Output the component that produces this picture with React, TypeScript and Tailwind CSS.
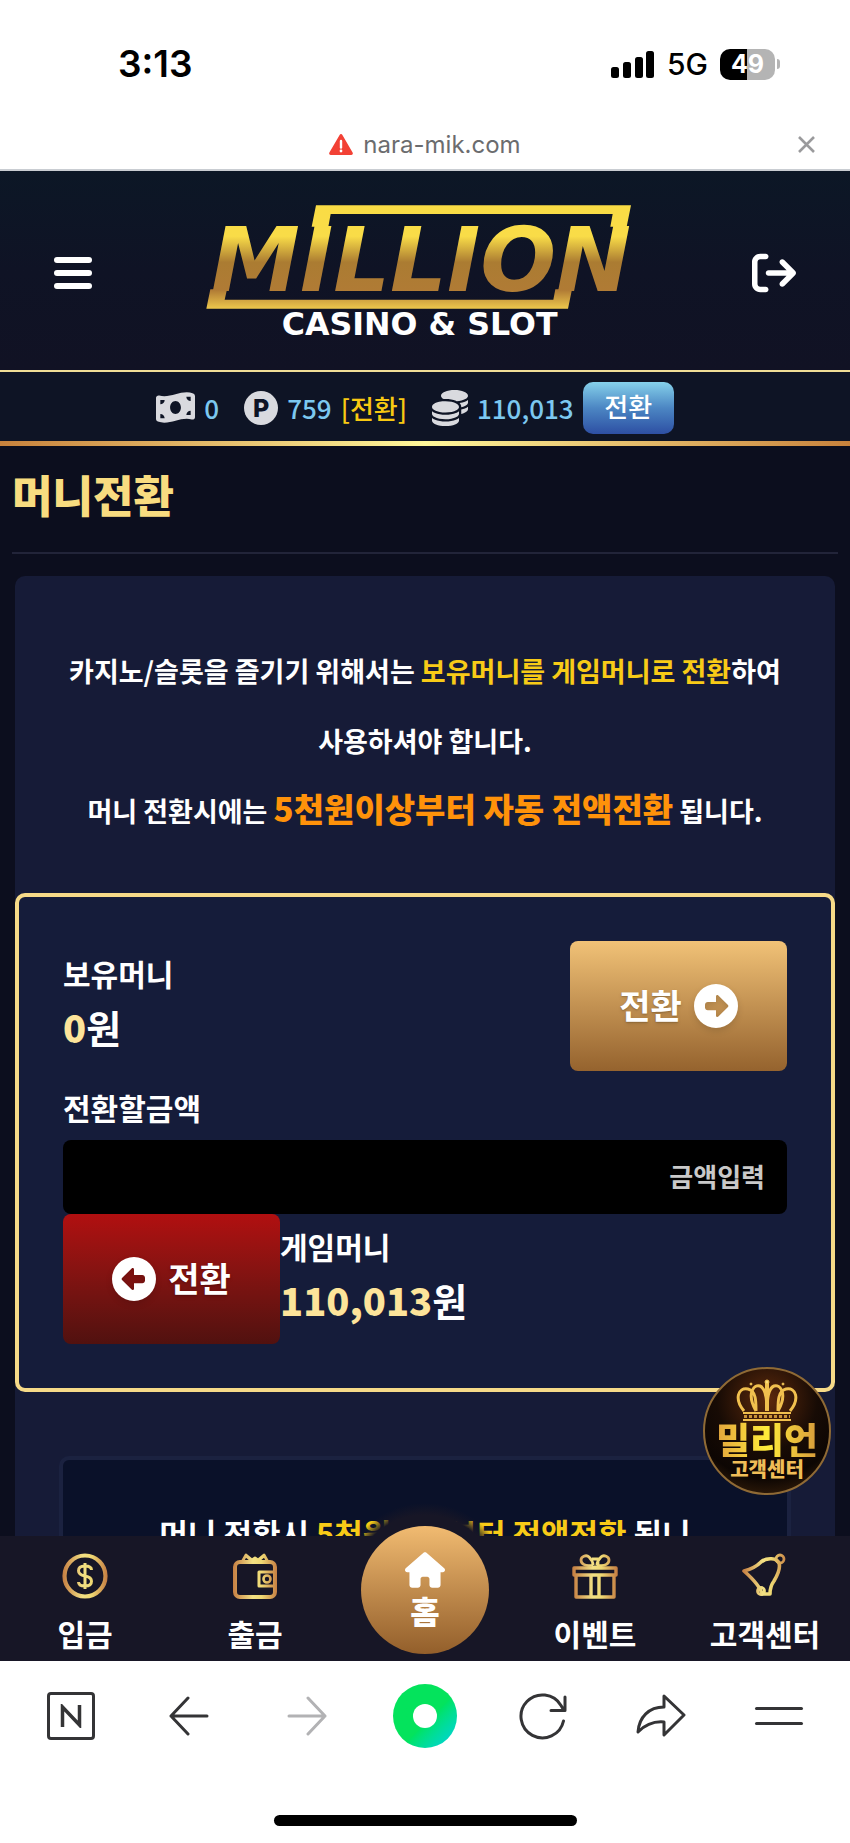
import { FaArrowRightFromBracket, FaCircleLeft, FaCircleRight, FaCoins, FaHouse, FaMoneyBillWave } from "react-icons/fa6";

const balance = { cash: "0", point: "759", game: "110,013" };

function StatusBar() {
  return (
    <div className="flex h-[120px] shrink-0 items-center justify-between bg-white pt-2 pr-[70px] pl-[118px] font-['Inter',sans-serif] text-black">
      <span className="text-[37px] leading-10 font-semibold">3:13</span>
      <div className="flex items-center gap-3">
        <svg className="h-[27px] w-11" viewBox="0 0 44 27" aria-hidden="true">
          <rect x="0" y="16" width="8" height="11" rx="2.5" />
          <rect x="12" y="11" width="8" height="16" rx="2.5" />
          <rect x="24" y="6" width="8" height="21" rx="2.5" />
          <rect x="35" y="0" width="8" height="27" rx="2.5" />
        </svg>
        <span className="text-[30px] leading-8 font-medium">5G</span>
        <div className="flex items-center gap-0.5">
          <div className="flex h-[31px] w-[55px] items-center justify-center rounded-[10px] bg-linear-to-r from-black from-50% to-[#b4b4b4] to-50% text-[25px] leading-7 font-bold text-white">
            49
          </div>
          <div className="h-2.5 w-[3px] rounded-r bg-[#b4b4b4]" />
        </div>
      </div>
    </div>
  );
}

function AddressBar() {
  return (
    <div className="grid h-[51px] shrink-0 grid-cols-[1fr_auto_1fr] items-center border-b-2 border-[#c9cdd2] bg-white px-[34px]">
      <span />
      <div className="flex items-center gap-2.5 font-['Inter',sans-serif] text-[24px] leading-8 text-[#6b6c6e]">
        <svg className="h-[21px] w-6" viewBox="0 0 24 21" aria-hidden="true">
          <path d="M10.6.9a1.6 1.6 0 0 1 2.8 0l10.2 17.7A1.6 1.6 0 0 1 22.2 21H1.8a1.6 1.6 0 0 1-1.4-2.4z" fill="#f24135" />
          <path d="M12 7v6.5" stroke="#fff" strokeWidth="2.4" strokeLinecap="round" />
          <circle cx="12" cy="17" r="1.4" fill="#fff" />
        </svg>
        nara-mik.com
      </div>
      <button aria-label="닫기" className="justify-self-end">
        <svg className="size-[19px]" viewBox="0 0 19 19" aria-hidden="true">
          <path d="M2 2l15 15M17 2L2 17" stroke="#9a9a9c" strokeWidth="2.6" />
        </svg>
      </button>
    </div>
  );
}

function Logo() {
  return (
    <svg className="h-[150px] w-[450px]" viewBox="0 0 1350 450" role="img" aria-label="MILLION CASINO & SLOT">
      <defs>
        <linearGradient id="logoGold" gradientUnits="userSpaceOnUse" x1="0" y1="22" x2="0" y2="332">
          <stop offset="0" stopColor="#f9dc45" />
          <stop offset="0.3" stopColor="#f9dc48" />
          <stop offset="0.55" stopColor="#ab7c32" />
          <stop offset="0.82" stopColor="#b07b35" />
          <stop offset="1" stopColor="#edc74c" />
        </linearGradient>
      </defs>
      <g fill="url(#logoGold)">
        <path d="M344 86L357 22H1302L1289 86H1240L1247 48H401L394 86Z" />
        <path d="M40 274L28 332H1113L1125 274H1075L1069 305H83L90 274Z" />
        <text x="42" y="278" fontFamily="DejaVu Sans, sans-serif" fontSize="268" fontWeight="700" fontStyle="italic">MILLION</text>
      </g>
      <text x="668" y="410" textAnchor="middle" fill="#fff" fontFamily="DejaVu Sans, sans-serif" fontSize="95" fontWeight="700">CASINO &amp; SLOT</text>
    </svg>
  );
}

function Header() {
  return (
    <header className="flex h-[201px] shrink-0 items-center justify-between border-b-2 border-[#f0dd96] bg-linear-to-b from-[#0c1726] via-[#0f1325] to-[#111224] px-[54px] pt-1 text-white">
      <button aria-label="메뉴" className="flex w-[38px] flex-col gap-[7px]">
        <span className="h-[6px] rounded-sm bg-current" />
        <span className="h-[6px] rounded-sm bg-current" />
        <span className="h-[6px] rounded-sm bg-current" />
      </button>
      <Logo />
      <button aria-label="로그아웃">
        <FaArrowRightFromBracket className="size-[44px]" />
      </button>
    </header>
  );
}

function WalletBar() {
  return (
    <div className="shrink-0 bg-linear-to-r from-[#c8823c] via-[#fff79a] to-[#c8823c] pb-[5px]">
      <div className="flex h-[69px] items-center justify-center gap-[9px] bg-[#0e1425] pt-0.5 pr-5 text-[26px] leading-10 font-medium text-[#7cc8f0]">
        <FaMoneyBillWave className="size-[39px] text-[#d9dadf]" />
        <span className="mr-4">{balance.cash}</span>
        <span className="flex size-[34px] items-center justify-center rounded-full bg-[#d9dadf] font-['Inter',sans-serif] text-[25px] font-extrabold text-[#0e1425]">P</span>
        <span>{balance.point}</span>
        <a href="#point" className="mr-4 text-[#f8c912]">[전환]</a>
        <FaCoins className="size-[36px] text-[#d9dadf]" />
        <span>{balance.game}</span>
        <button className="h-[52px] w-[91px] rounded-[10px] bg-linear-to-b from-[#86d1ea] via-[#4c86c3] to-[#2e4fa3] pb-1 text-[26px] text-white">전환</button>
      </div>
    </div>
  );
}

function TransferPanel() {
  return (
    <form className="rounded-[10px] border-4 border-[#f6da88] bg-[#151c3a] px-11 pt-11 pb-11 font-bold text-white">
      <div className="flex justify-between">
        <div className="pt-3">
          <p className="text-[30px] leading-10">보유머니</p>
          <p className="pt-2 text-[38px] leading-[52px]"><span className="font-black text-[#fde49a]">{balance.cash}</span>원</p>
        </div>
        <button type="button" className="flex h-[130px] w-[217px] items-center justify-center gap-3 rounded-lg bg-linear-to-b from-[#f1c277] to-[#95632e] text-[34px] text-shadow-md">
          <span className="pb-1">전환</span>
          <FaCircleRight className="size-11 drop-shadow-md" />
        </button>
      </div>
      <label htmlFor="amount" className="block pt-4 pb-[13px] text-[30px] leading-10">전환할금액</label>
      <input id="amount" placeholder="금액입력" className="block h-[74px] w-full rounded-lg bg-black px-[22px] pb-1 text-right text-[26px] placeholder:text-[#c9c9c9]" />
      <div className="flex">
        <button type="button" className="flex h-[130px] w-[217px] items-center justify-center gap-3 rounded-lg bg-linear-to-b from-[#b10f10] to-[#51110f] text-[34px] text-shadow-md">
          <FaCircleLeft className="size-11 drop-shadow-md" />
          <span className="pb-1">전환</span>
        </button>
        <div className="pt-3">
          <p className="text-[30px] leading-10">게임머니</p>
          <p className="pt-2 text-[38px] leading-[52px]"><span className="font-black text-[#fde49a]">{balance.game}</span>원</p>
        </div>
      </div>
    </form>
  );
}

function SupportBadge() {
  return (
    <a href="#support" className="absolute right-[19px] bottom-[41px] flex size-32 flex-col items-center rounded-full border-2 border-[#8f6a35] bg-[radial-gradient(circle_at_50%_25%,#5e2a0c,#170b05_45%,#0d0603_70%,#4a2b0e)] pt-2.5">
      <svg className="h-[42px] w-[62px] shrink-0" viewBox="0 0 62 42" fill="none" stroke="#f1c04e" aria-hidden="true">
        <path d="M8 32C-2 20 2 8 12 10c8 2 8 12 8 22M20 32C10 14 18 5 24 7c5 2 7 12 7 25M54 32c10-12 6-24-4-22-8 2-8 12-8 22M42 32C52 14 44 5 38 7c-5 2-7 12-7 25" strokeWidth="3" />
        <path d="M31 32V4" strokeWidth="4" />
        <circle cx="31" cy="3" r="2" fill="#f9dd7a" />
        <circle cx="15" cy="5" r="1" fill="#f9dd7a" />
        <circle cx="47" cy="5" r="1" fill="#f9dd7a" />
        <path d="M7 34h48M7 41h48" strokeWidth="2" />
        <path d="M8 37.500h46" strokeWidth="3" strokeDasharray="3 2" stroke="#c99236" />
      </svg>
      <span className="bg-linear-to-r from-[#e2a43c] via-[#ffec3a] to-[#d69a3a] bg-clip-text text-[37px] leading-9 font-black text-transparent">밀리언</span>
      <span className="text-[20px] leading-6 font-black text-[#f0bd57]">고객센터</span>
    </a>
  );
}

function GoldIcon({ name }: { name: string }) {
  return (
    <svg className="size-12" viewBox="0 0 48 48" fill="none" stroke="url(#iconGold)" strokeWidth="3.4" strokeLinejoin="round" aria-hidden="true">
      <defs>
        <linearGradient id="iconGold" gradientUnits="userSpaceOnUse" x1="2" y1="0" x2="46" y2="0">
          <stop offset="0" stopColor="#c67f43" />
          <stop offset="0.45" stopColor="#f3e184" />
          <stop offset="0.65" stopColor="#efd873" />
          <stop offset="1" stopColor="#c67f43" />
        </linearGradient>
      </defs>
      {name === "coin" && (
        <>
          <circle cx="24" cy="24" r="20.5" strokeWidth="4.2" />
          <path d="M30.500 18c0-3-2.500-4-6.500-4s-6.500 1.500-6.500 4.800 2.500 4.500 6.500 5.200 6.500 1.800 6.500 5.200-2.500 4.800-6.500 4.800-6.500-1.300-6.500-4M24 11v26" strokeWidth="3" />
        </>
      )}
      {name === "wallet" && (
        <>
          <rect x="4" y="10" width="40" height="35" rx="5" strokeWidth="4" />
          <path d="M11 10l4-7 6 5 3-2 3 2 6-5 4 7M15 4l6 5M33 4l-6 5" strokeWidth="2.800" />
          <path d="M44 20H28v14h16" strokeWidth="3" />
          <circle cx="36" cy="27" r="3.5" strokeWidth="2.600" />
        </>
      )}
      {name === "gift" && (
        <>
          <path d="M3 16h42v7H3zM5 23v22h38V23M20 24v21M28 24v21" />
          <path d="M22 13c-9 2-12-2-12-5s5-6 8-3 4 6 4 8M26 13c9 2 12-2 12-5s-5-6-8-3-4 6-4 8M21 7h6v8h-6" strokeWidth="2.800" />
        </>
      )}
      {name === "bell" && (
        <>
          <path d="M3 19c8-2 13-5 17-9 6-5 16-4 18 1 2 6-2 13-5 18-3 4-4 8-4 13h-8c-2-8-9-15-18-23z" strokeWidth="3.600" />
          <circle cx="39" cy="7" r="4" strokeWidth="2.800" />
          <circle cx="20" cy="39" r="3.5" strokeWidth="2.800" />
        </>
      )}
    </svg>
  );
}

function NavItem({ icon, label }: { icon: string; label: string }) {
  return (
    <a href={`#${icon}`} className="flex flex-col items-center gap-3.5 pt-4">
      <GoldIcon name={icon} />
      <span className="text-[30px] leading-[38px]">{label}</span>
    </a>
  );
}

function BottomNav() {
  return (
    <nav className="relative grid h-[125px] shrink-0 grid-cols-5 bg-[#171626] font-bold text-white">
      <NavItem icon="coin" label="입금" />
      <NavItem icon="wallet" label="출금" />
      <div className="-mt-[34px] flex justify-center">
        <a href="#home" className="flex h-[159px] w-[172px] shrink-0 items-start justify-center bg-[radial-gradient(circle_at_50%_87px,#171626_74px,transparent_86px)] pt-6">
          <span className="flex size-32 flex-col items-center rounded-full bg-linear-to-b from-[#f1bb71] to-[#935f2b] pt-6">
            <FaHouse className="size-10" />
            <span className="text-[32px] leading-10 font-black">홈</span>
          </span>
        </a>
      </div>
      <NavItem icon="gift" label="이벤트" />
      <NavItem icon="bell" label="고객센터" />
    </nav>
  );
}

function BrowserBar() {
  return (
    <footer className="flex h-[182px] shrink-0 flex-col items-center justify-between bg-white pt-[23px] pb-[17px]">
      <div className="grid w-full grid-cols-7 place-items-center px-3 text-[#343436]">
        <button aria-label="네이버" className="flex size-12 items-center justify-center rounded border-[3px] border-current">
          <svg className="size-6" viewBox="0 0 24 24" fill="none" stroke="currentColor" strokeWidth="3.500" aria-hidden="true">
            <path d="M3.500 23V3l17 18V1" />
          </svg>
        </button>
        <button aria-label="뒤로">
          <svg className="size-10" viewBox="0 0 40 40" fill="none" stroke="currentColor" strokeWidth="3" strokeLinecap="round" strokeLinejoin="round" aria-hidden="true">
            <path d="M19 2L2 20l17 18M2 20h36" />
          </svg>
        </button>
        <button aria-label="앞으로" className="text-[#b2b2b4]">
          <svg className="size-10" viewBox="0 0 40 40" fill="none" stroke="currentColor" strokeWidth="3" strokeLinecap="round" strokeLinejoin="round" aria-hidden="true">
            <path d="M21 2l17 18-17 18M38 20H2" />
          </svg>
        </button>
        <button aria-label="그린닷" className="flex size-16 items-center justify-center rounded-full bg-linear-to-br from-[#04e35c] from-55% to-[#04cfe4]">
          <span className="size-6 rounded-full bg-white" />
        </button>
        <button aria-label="새로고침">
          <svg className="size-12" viewBox="0 0 48 48" fill="none" stroke="currentColor" strokeWidth="3" strokeLinecap="round" strokeLinejoin="round" aria-hidden="true">
            <path d="M44.500 29A21.500 21.500 0 1 1 42 13.500l3 5M46 5v13.500H32" />
          </svg>
        </button>
        <button aria-label="공유">
          <svg className="size-[50px]" viewBox="0 0 50 50" fill="none" stroke="currentColor" strokeWidth="3" strokeLinejoin="round" aria-hidden="true">
            <path d="M28 5l20 19-20 20V31C17 30 9 34 2 41c1-15 11-25 26-25z" />
          </svg>
        </button>
        <button aria-label="더보기" className="flex flex-col gap-3">
          <span className="h-[3px] w-12 rounded bg-current" />
          <span className="h-[3px] w-12 rounded bg-current" />
        </button>
      </div>
      <div className="h-[11px] w-[303px] rounded-full bg-black" />
    </footer>
  );
}

export default function App() {
  return (
    <div className="flex h-screen flex-col overflow-hidden bg-[#0c0e1e] font-['Noto_Sans_CJK_KR',sans-serif]">
      <StatusBar />
      <AddressBar />
      <Header />
      <WalletBar />
      <div className="relative min-h-0 flex-1">
        <main className="h-full overflow-hidden">
          <h1 className="mx-3 border-b-2 border-[#222439] pt-[18px] pb-7 text-[44px] leading-[60px] font-black text-[#f8dc80]">머니전환</h1>
          <section className="mx-[15px] mt-[22px] rounded-t-[10px] bg-[#161b37]">
            <div className="pt-[60px] pb-[47px] text-center text-[27px] leading-[70px] font-bold text-white">
              <p>
                카지노/슬롯을 즐기기 위해서는 <span className="text-[#f8cb17]">보유머니를 게임머니로 전환</span>하여
                <br />
                사용하셔야 합니다.
              </p>
              <p>
                머니 전환시에는 <strong className="text-[33px] leading-10 font-black text-[#ff920a]">5천원이상부터 자동 전액전환</strong> 됩니다.
              </p>
            </div>
            <TransferPanel />
            <div className="px-11 pt-16">
              <p className="rounded-[10px] border-4 border-[#1b2240] bg-[#0a1129] pt-12 pb-12 text-center text-[31px] leading-[50px] font-bold text-white">
                머니 전환시 <span className="text-[#f8cb17]">5천원이상부터 전액전환</span> 됩니
                <br />
                다.
              </p>
            </div>
          </section>
        </main>
        <SupportBadge />
      </div>
      <BottomNav />
      <BrowserBar />
    </div>
  );
}
